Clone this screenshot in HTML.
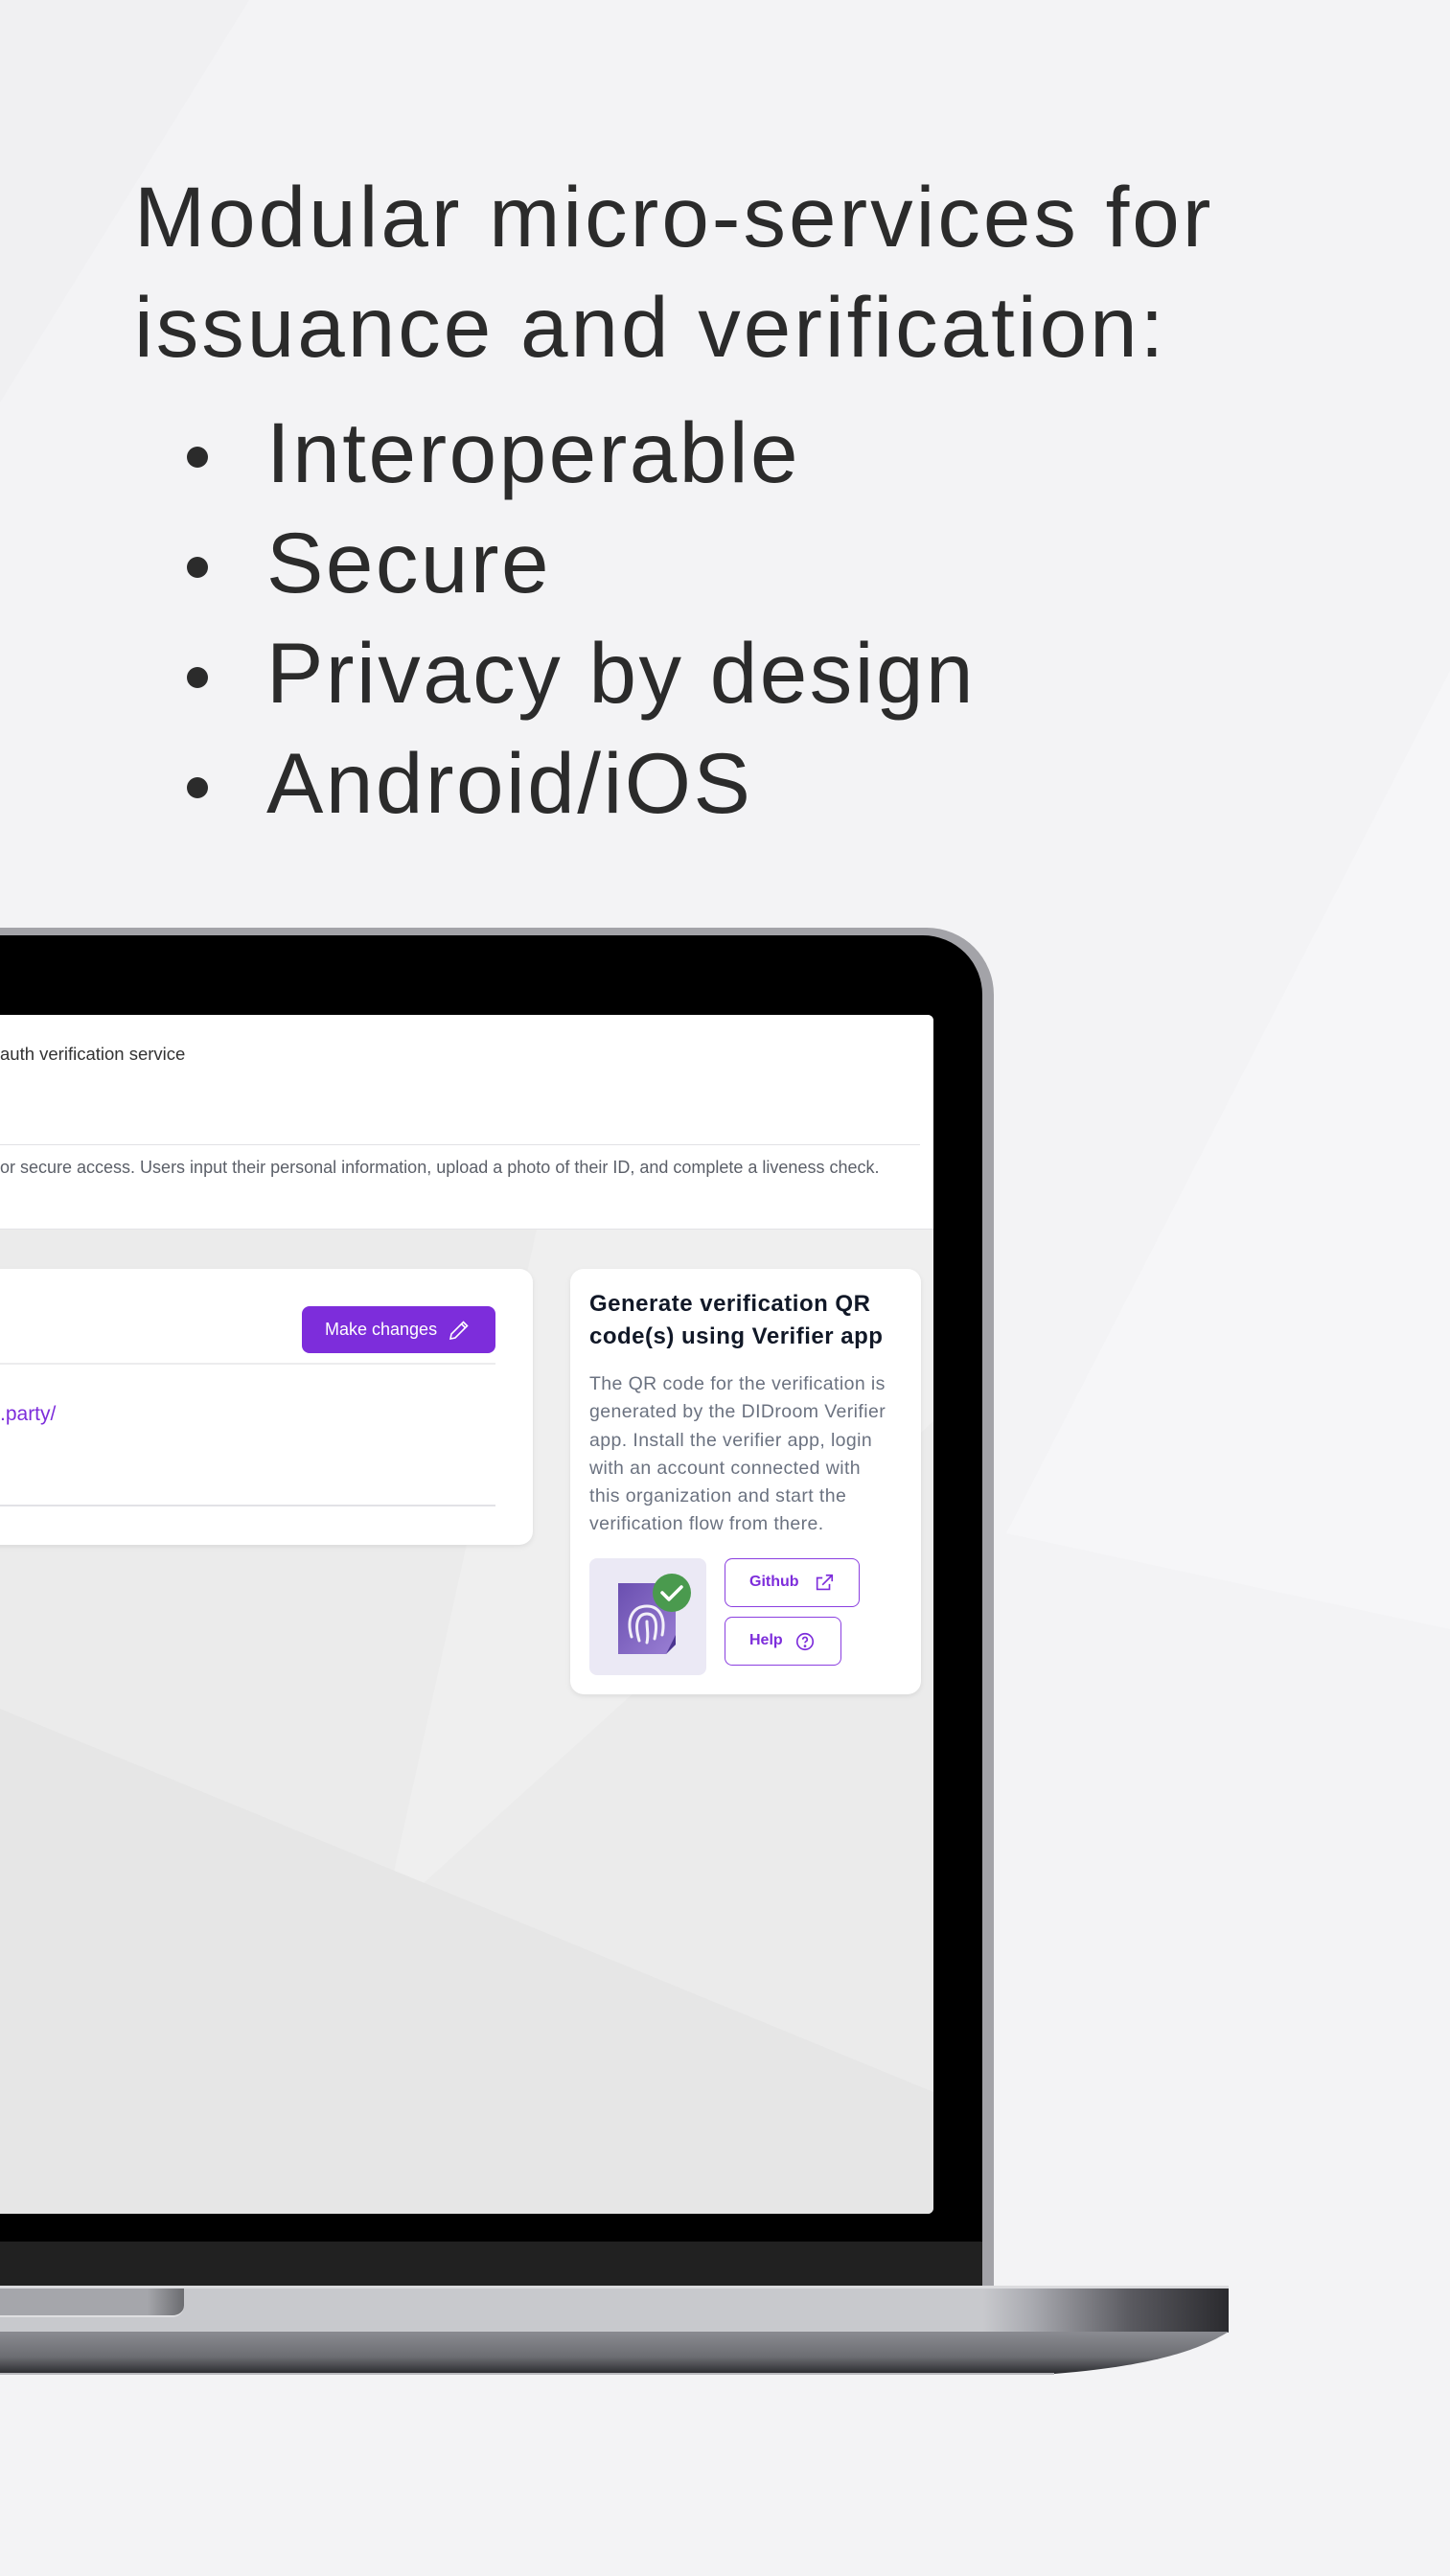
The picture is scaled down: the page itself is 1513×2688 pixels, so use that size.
<!DOCTYPE html>
<html><head><meta charset="utf-8"><style>
*{margin:0;padding:0;box-sizing:border-box}
html,body{width:1513px;height:2688px;overflow:hidden}
body{background:#f3f3f5;position:relative;font-family:"Liberation Sans",sans-serif}
.abs{position:absolute}
.title{left:140px;font-size:89px;color:#2b2b2b;letter-spacing:3px;white-space:nowrap;line-height:1}
.bul{left:195px;font-size:89px;color:#2b2b2b;letter-spacing:2.5px;white-space:nowrap;line-height:1}
.bul i{position:absolute;left:0;top:38px;width:22px;height:22px;border-radius:50%;background:#2b2b2b}
.bul span{position:absolute;left:83px;top:0}
.ui{font-family:"Liberation Sans",sans-serif}
</style></head><body>
<svg class="abs" style="left:0;top:0" width="1513" height="2688">
<polygon points="0,0 260,0 0,420" fill="#f0f0f2"/>
<polygon points="1513,700 1513,1700 1050,1600" fill="#f6f6f8"/>
</svg>

<div class="abs title" style="top:182px">Modular micro-services for</div>
<div class="abs title" style="top:297px">issuance and verification:</div>
<div class="abs bul" style="top:428px"><i></i><span>Interoperable</span></div>
<div class="abs bul" style="top:543px"><i></i><span>Secure</span></div>
<div class="abs bul" style="top:658px"><i></i><span>Privacy by design</span></div>
<div class="abs bul" style="top:773px"><i></i><span>Android/iOS</span></div>

<!-- laptop frame -->
<div class="abs" style="left:-80px;top:968px;width:1117px;height:1430px;background:#a3a3a8;border-radius:0 70px 0 0"></div>
<div class="abs" style="left:-80px;top:976px;width:1105px;height:1420px;background:#000;border-radius:0 62px 0 0"></div>
<div class="abs" style="left:0;top:2339px;width:1025px;height:48px;background:#212121"></div>
<!-- base -->
<div class="abs" style="left:0;top:2385px;width:1282px;height:4px;background:#dcdcdf"></div>
<div class="abs" style="left:0;top:2388px;width:1282px;height:46px;background:linear-gradient(90deg,#c8c9cd 0%,#c8c9cd 80%,#a9aab0 84%,#5a5a60 92%,#2a2a2e 100%)"></div>
<div class="abs" style="left:0;top:2388px;width:192px;height:30px;background:linear-gradient(90deg,#a5a6ab 80%,#6b6c70 100%);border-radius:0 0 12px 0;border-bottom:2px solid #dfdfe2"></div>
<svg class="abs" style="left:0;top:2433px" width="1282" height="46">
<defs><linearGradient id="bg" x1="0" y1="0" x2="0" y2="1"><stop offset="0" stop-color="#8a8b91"/><stop offset="0.6" stop-color="#6c6d72"/><stop offset="1" stop-color="#2a2b2f"/></linearGradient></defs>
<path d="M0,0 H1282 C1250,20 1200,36 1100,44 H0 Z" fill="url(#bg)"/>
<path d="M0,44 H1100" stroke="#b8b8bc" stroke-width="2"/>
</svg>

<!-- screen -->
<div class="abs ui" style="left:0;top:1059px;width:974px;height:1251px;background:#ebebeb;border-radius:0 6px 6px 0;overflow:hidden">
 <svg class="abs" style="left:0;top:224px" width="974" height="1027">
  <polygon points="560,0 974,0 974,200 400,720" fill="#efefef"/>
  <polygon points="0,500 974,900 974,1027 0,1027" fill="#e6e6e6"/>
 </svg>
 <div class="abs" style="left:0;top:0;width:974px;height:224px;background:#fff;border-bottom:1px solid #e3e3e6">
  <div class="abs" style="left:0;top:30px;font-size:18.5px;color:#333;white-space:nowrap">auth verification service</div>
  <div class="abs" style="left:0;top:135px;width:960px;height:1px;background:#e2e2e5"></div>
  <div class="abs" style="left:0;top:149px;font-size:18px;color:#5b5f68;white-space:nowrap">or secure access. Users input their personal information, upload a photo of their ID, and complete a liveness check.</div>
 </div>
 <!-- left card -->
 <div class="abs" style="left:-20px;top:265px;width:576px;height:288px;background:#fff;border-radius:14px;box-shadow:0 2px 6px rgba(0,0,0,.08)">
  <div class="abs" style="left:335px;top:39px;width:202px;height:49px;background:#7d2ddb;border-radius:8px;color:#fff;font-size:18px">
   <span class="abs" style="left:24px;top:14px">Make changes</span>
   <svg class="abs" style="left:152px;top:13px" width="24" height="24" viewBox="0 0 24 24" fill="none" stroke="#fff" stroke-width="1.6"><path d="M16.5 3.5l4 4L8 20l-5 1 1-5z"/><path d="M14.5 5.5l4 4"/></svg>
  </div>
  <div class="abs" style="left:0;top:98px;width:537px;height:2px;background:#ececee"></div>
  <div class="abs" style="left:20px;top:140px;font-size:21px;color:#7d2ddb">.party/</div>
  <div class="abs" style="left:0;top:246px;width:537px;height:2px;background:#e2e2e6"></div>
 </div>
 <!-- right card -->
 <div class="abs" style="left:595px;top:265px;width:366px;height:444px;background:#fff;border-radius:14px;box-shadow:0 2px 6px rgba(0,0,0,.08)">
  <div class="abs" style="left:20px;top:20px;font-size:24px;font-weight:bold;color:#111827;line-height:34px;letter-spacing:0.5px;white-space:nowrap">Generate verification QR<br>code(s) using Verifier app</div>
  <div class="abs" style="left:20px;top:106px;font-size:19.5px;color:#6b7280;line-height:29.3px;letter-spacing:0.4px;white-space:nowrap">The QR code for the verification is<br>generated by the DIDroom Verifier<br>app. Install the verifier app, login<br>with an account connected with<br>this organization and start the<br>verification flow from there.</div>
  <div class="abs" style="left:20px;top:302px;width:122px;height:122px;background:#ebe9f5;border-radius:8px">
   <svg width="122" height="122" viewBox="0 0 122 122">
    <defs><linearGradient id="pg" x1="0" y1="0" x2="1" y2="1"><stop offset="0" stop-color="#6a4fb0"/><stop offset="1" stop-color="#9a7fd4"/></linearGradient></defs>
    <path d="M30,26 H90 V90 L80,100 H30 Z" fill="url(#pg)"/>
    <path d="M80,100 L90,80 V90 Z" fill="#4b3590"/>
    <g fill="none" stroke="#fff" stroke-width="3" stroke-linecap="round" opacity=".9">
     <path d="M44,82 C38,62 46,50 60,50 C72,50 80,60 76,80"/>
     <path d="M52,86 C46,66 52,58 60,58 C68,58 72,66 68,84"/>
     <path d="M60,66 C60,74 62,80 60,88"/>
    </g>
    <circle cx="86" cy="36" r="20" fill="#4a9a4e"/>
    <path d="M76,36 L83,43 L96,30" stroke="#fff" stroke-width="3.5" fill="none" stroke-linecap="round" stroke-linejoin="round"/>
   </svg>
  </div>
  <div class="abs" style="left:161px;top:302px;width:141px;height:51px;border:1.5px solid #8b3fe0;border-radius:8px;color:#7d2ddb;font-size:16px;font-weight:bold">
   <span class="abs" style="left:25px;top:15px">Github</span>
   <svg class="abs" style="left:92px;top:14px" width="22" height="22" viewBox="0 0 24 24" fill="none" stroke="#7d2ddb" stroke-width="1.8"><path d="M18 13v6H4V6h6"/><path d="M14 3h7v7M21 3L10 14"/></svg>
  </div>
  <div class="abs" style="left:161px;top:363px;width:122px;height:51px;border:1.5px solid #8b3fe0;border-radius:8px;color:#7d2ddb;font-size:16px;font-weight:bold">
   <span class="abs" style="left:25px;top:15px">Help</span>
   <svg class="abs" style="left:72px;top:14px" width="22" height="22" viewBox="0 0 24 24" fill="none" stroke="#7d2ddb" stroke-width="1.8"><circle cx="12" cy="12" r="9"/><path d="M9.5 9.5a2.5 2.5 0 1 1 3.5 2.3c-.7.4-1 .9-1 1.7"/><circle cx="12" cy="17" r=".6" fill="#7d2ddb"/></svg>
  </div>
 </div>
</div>
</body></html>
